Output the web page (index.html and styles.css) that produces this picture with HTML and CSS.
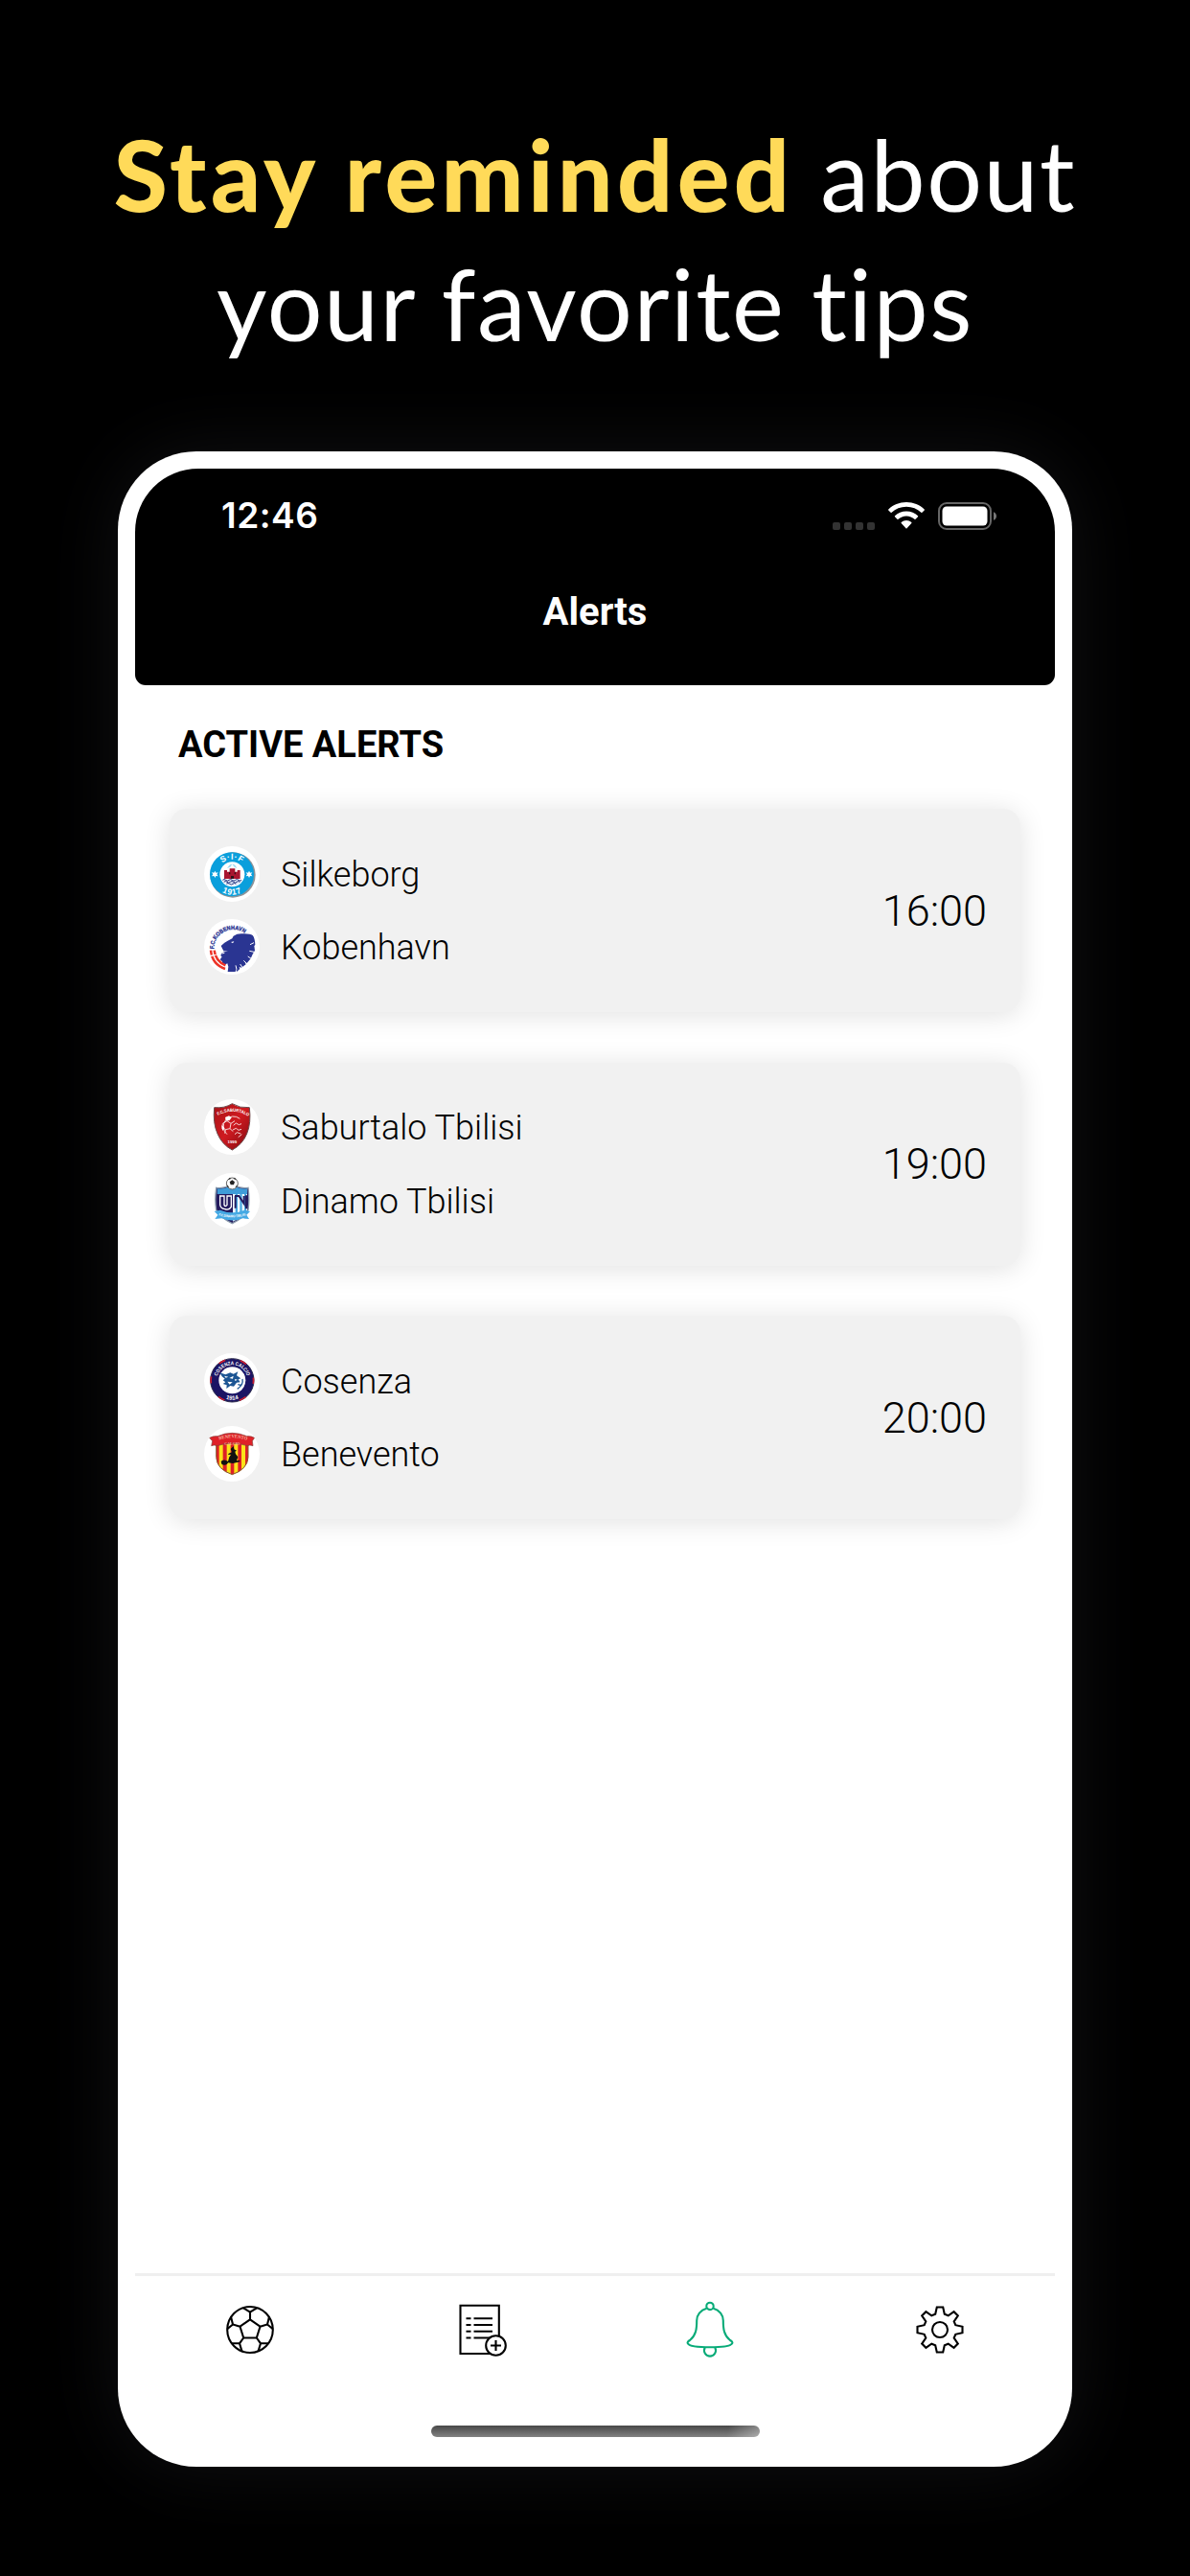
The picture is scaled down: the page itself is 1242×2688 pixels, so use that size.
FILE: index.html
```html
<!DOCTYPE html>
<html lang="en">
<head>
    <meta charset="UTF-8">
    <meta name="viewport" content="width=device-width, initial-scale=1.0">
    <title>Alerts</title>
    <link rel="stylesheet" href="styles.css">
</head>
<body>
    <h1 class="headline">
        <span class="line"><strong>Stay reminded</strong> about</span>
        <span class="line">your favorite tips</span>
    </h1>

    <div class="phone">
        <header class="top">
            <div class="status">
                <span class="clock">12:46</span>
                <div class="status-icons">
                    <div class="signal"><i></i><i></i><i></i><i></i></div>
                    <svg class="wifi" width="38" height="28" viewBox="0 0 38 28">
                        <path d="M19 0C11.700 0 5 2.800.300 7.400q-.5.500 0 1L2.600 10.700q.5.500 1 0C7.600 6.900 13 4.700 19 4.700s11.400 2.200 15.400 6q.5.500 1 0L37.700 8.400q.5-.5 0-1C33 2.800 26.300 0 19 0z"/>
                        <path d="M19 9.600c-4.700 0-8.900 1.800-12 4.700q-.5.500 0 1l2.500 2.500q.5.500 1 0c2.200-2 5.200-3.300 8.500-3.300s6.300 1.300 8.500 3.300q.5.500 1 0l2.500-2.500q.5-.5 0-1c-3.100-2.900-7.300-4.700-12-4.700z"/>
                        <path d="M19 19c-2 0-3.900.8-5.300 2q-.5.500 0 1l4.800 5.300q.5.500 1 0l4.800-5.300q.5-.5 0-1C22.900 19.800 21 19 19 19z"/>
                    </svg>
                    <svg class="battery" width="62" height="29" viewBox="0 0 62 29">
                        <rect x="1" y="1" width="54" height="27" rx="8" fill="none" stroke="#666" stroke-width="2"/>
                        <rect x="4.500" y="4.500" width="47" height="20" rx="4.500" fill="#fff"/>
                        <path d="M58 10.200c4 1.400 4 7.200 0 8.600z" fill="#777"/>
                    </svg>
                </div>
            </div>
            <h2 class="title">Alerts</h2>
        </header>

        <main class="content">
            <h3 class="section">ACTIVE ALERTS</h3>
            <div class="alerts">
                <div class="card">
                    <div class="teams">
                        <div class="team">
                            <svg class="logo" viewBox="0 0 174 174">
                                <circle cx="90" cy="90" r="71" fill="#8d9499"/>
                                <circle cx="87" cy="88" r="69" fill="#0a9fdc"/>
                                <circle cx="88" cy="88" r="39" fill="#fff"/>
                                <path d="M72 69q8-14 16-13q9-1 15 13l-8-4-7-9-6 9z" fill="#9fdcf2"/>
                                <path d="M63 75h9v5h8V70h17v10h7v-5h9v27H63z" fill="#a8152f"/>
                                <path d="M78 82h4v6h-4zM95 82h4v6h-4zM84 93h9v9h-9z" fill="#301018"/>
                                <path d="M57 105h62q-3 10-15 15H74q-12-5-17-15z" fill="#dfe9f8"/>
                                <path d="M58 106q5-5 10 0t10 0 10 0 10 0 10 0 9 0M62 112q5-5 10 0t10 0 10 0 10 0 10 0M70 118q5-5 10 0t10 0 10 0" fill="none" stroke="#25357f" stroke-width="3"/>
                                <path id="sifTop" d="M41 88a47 47 0 0 1 94 0" fill="none"/>
                                <path id="sifBottom" d="M24 88a64 64 0 0 0 128 0" fill="none"/>
                                <text class="crest" font-size="26" fill="#fff" text-anchor="middle" letter-spacing="2"><textPath href="#sifTop" startOffset="50%">S·I·F</textPath></text>
                                <text class="crest" font-size="26" fill="#fff" text-anchor="middle" letter-spacing="2"><textPath href="#sifBottom" startOffset="50%">1917</textPath></text>
                                <path id="star" d="M34 77l3 6 7-1-4 6 4 6-7-1-3 6-3-6-7 1 4-6-4-6 7 1z" fill="#fff"/>
                                <use href="#star" x="107"/>
                            </svg>
                            <span class="name">Silkeborg</span>
                        </div>
                        <div class="team">
                            <svg class="logo" viewBox="0 0 174 174">
                                <path id="fck" d="M31 94C30 63 54 33 90 33q20 0 36 11" fill="none"/>
                                <text class="crest" font-size="18" fill="#2a3592" stroke="#2a3592" stroke-width="1"><textPath href="#fck" textLength="134" lengthAdjust="spacingAndGlyphs">F.C.KOBENHAVN</textPath></text>
                                <path d="M53 84l11-10 10-6 14-7 4-8q12-8 28-7 24-1 32 5 7 8 8 30l-3 3 2 14-7 12-6 14-12 14-6-3 3 7-14 10-7-2 2 6-10 9-2-10-2 10H74l2-16-3-10-10 5-7-5 1-6-6-5 1-5 4-4-4-5q1-8 10-11l13-2-14-1z" fill="#2a3592"/>
                                <path d="M84 72l10-2-4 6z" fill="#fff"/>
                                <path d="M56 108l8-2M99 145l3 13M113 141l8 12M124 130l12 12M137 117l12 8M142 100l14 3M144 80l12-6" stroke="#fff" stroke-width="3"/>
                                <path d="M21 98q4 44 45 58M32 98q3 33 35 47" fill="none" stroke="#ed3327" stroke-width="7.500"/>
                                <path d="M14 116l24-4M30 112l-12 6" stroke="#fff" stroke-width="3"/>
                            </svg>
                            <span class="name">Kobenhavn</span>
                        </div>
                    </div>
                    <span class="time">16:00</span>
                </div>

                <div class="card">
                    <div class="teams">
                        <div class="team">
                            <svg class="logo" viewBox="0 0 174 174">
                                <defs>
                                    <linearGradient id="red" x1="0" y1="0" x2="1" y2="1">
                                        <stop offset="0" stop-color="#a81217"/>
                                        <stop offset=".5" stop-color="#cf1a20"/>
                                        <stop offset="1" stop-color="#7c0a10"/>
                                    </linearGradient>
                                </defs>
                                <path d="M88 14q24 15 54 12 6 48-8 82-14 34-46 51-32-17-46-51-15-34-10-82 32 3 56-12z" fill="url(#red)" stroke="#6b4b4d" stroke-width="3"/>
                                <path id="sabTop" d="M40 53q48-29 98 0" fill="none"/>
                                <text class="crest" font-size="14" fill="#fff"><textPath href="#sabTop" startOffset="4" textLength="100" lengthAdjust="spacingAndGlyphs">F.C.SABURTALO</textPath></text>
                                <g fill="none" stroke="#f6d6d6" stroke-width="3">
                                    <path d="M112 61A29 29 0 1 0 72 110M58 76l14-8 12 8-3 16-14 3-10-8zM84 76l12-8M81 92l10 9M67 95l-2 12M72 68l-2-12"/>
                                    <path d="M92 82l8-7 9 5 8-3M90 96l10-5 8 6 9-3M96 110l7-6 12 4M107 119l11-9"/>
                                </g>
                                <path d="M66 57l12-5 8 6-7 9-11 0zM56 81l8 9-5 9-4-8z" fill="#fff"/>
                                <text class="crest" x="88" y="138" font-size="13" fill="#fff" text-anchor="middle">1999</text>
                            </svg>
                            <span class="name">Saburtalo Tbilisi</span>
                        </div>
                        <div class="team">
                            <svg class="logo" viewBox="0 0 174 174">
                                <path d="M38 46q25 4 50-10 25 14 50 10 5 40 0 70-16 26-50 42-34-16-50-42-5-30 0-70z" fill="#241b5e" stroke="#8b9bad" stroke-width="4"/>
                                <path d="M41 49q23 2 47-10 24 12 47 10v17H41z" fill="#3f9cd8"/>
                                <path d="M90 66h45v50q-14 22-45 36z" fill="#f4fbff"/>
                                <path d="M98 66h7v80h-7zM112 66h7v70h-7zM126 66h6v55h-6z" fill="#4aa9e0"/>
                                <path d="M50 72h13v28q4 7 9 0V72h13v34q-7 12-20 7-14-2-15-14z" fill="none" stroke="#fff" stroke-width="4"/>
                                <path d="M96 72h13l16 24V72M98 72v38M132 70v42" fill="none" stroke="#241b5e" stroke-width="6"/>
                                <path d="M32 120l18-4q38 16 77 0l17 4-11 11 8 13-20-2q-33 13-66 0l-21 2 9-13z" fill="#45a9e4"/>
                                <path id="dinBottom" d="M40 131q46 16 96 0" fill="none"/>
                                <text class="crest" font-size="11" fill="#fff"><textPath href="#dinBottom" startOffset="6" textLength="86" lengthAdjust="spacingAndGlyphs">F.C.DINAMO TBILISI</textPath></text>
                                <circle cx="88" cy="33" r="18" fill="#fff" stroke="#666" stroke-width="3"/>
                                <path d="M80 28l8-6 8 6-3 9H83zM74 22l6-7 5 3zM102 22l-6-7-5 3zM73 37l6 9-7-3zM103 37l-6 9 7-3z" fill="#222"/>
                            </svg>
                            <span class="name">Dinamo Tbilisi</span>
                        </div>
                    </div>
                    <span class="time">19:00</span>
                </div>

                <div class="card">
                    <div class="teams">
                        <div class="team">
                            <svg class="logo" viewBox="0 0 174 174">
                                <circle cx="88" cy="85" r="68" fill="#1b1464" stroke="#2d2c4d" stroke-width="3"/>
                                <circle cx="88" cy="85" r="66.500" fill="none" stroke="#c91d31" stroke-width="5" stroke-dasharray="22 47.600" stroke-dashoffset="11"/>
                                <circle cx="88" cy="85" r="42" fill="#fff"/>
                                <path d="M49 61l18 6 15-6 10 4 14-7-4 12 13 9-8 3 6 9-11 1-9 12-11-2-12 9 1-11-12-4 8-5-8-6 6-5-9-7z" fill="#1c5593"/>
                                <path d="M63 71l13 3-8 3zM79 78l13-7-2 9zM73 89l16 2-9 7zM96 81l9 2-8 4z" fill="#fff"/>
                                <path d="M120 81q4 18-16 31M117 101l-11-3" fill="none" stroke="#1c5593" stroke-width="4"/>
                                <path id="cosTop" d="M40 85a48 48 0 0 1 96 0" fill="none"/>
                                <path id="cosBottom" d="M27 85a61 61 0 0 0 122 0" fill="none"/>
                                <text class="crest" font-size="16" fill="#fff"><textPath href="#cosTop" startOffset="13" textLength="124" lengthAdjust="spacingAndGlyphs">COSENZA CALCIO</textPath></text>
                                <text class="crest" font-size="18" fill="#fff" text-anchor="middle"><textPath href="#cosBottom" startOffset="50%">1914</textPath></text>
                            </svg>
                            <span class="name">Cosenza</span>
                        </div>
                        <div class="team">
                            <svg class="logo" viewBox="0 0 174 174">
                                <clipPath id="benClip"><path d="M38 44h100v54q-2 38-50 54-48-16-50-54z"/></clipPath>
                                <g clip-path="url(#benClip)">
                                    <path d="M38 40h100v114H38z" fill="#fbe219"/>
                                    <path d="M38 40h9v114h-9zM59 40h12v114H59zM83 40h11v114H83zM106 40h11v114h-11zM129 40h10v114h-10z" fill="#dd2027"/>
                                </g>
                                <path d="M38 44v54q2 38 50 54 48-16 50-54V44" fill="none" stroke="#85552b" stroke-width="3"/>
                                <path d="M17 37q10-6 25-5 46-20 92 0 15-1 24 5l-7 10 2 15q-10-4-18 0-47-16-94 0-9-4-18 0l3-15z" fill="#df2128" stroke="#82413b" stroke-width="2"/>
                                <path id="benTop" d="M40 46q48-18 98 0" fill="none"/>
                                <text class="crest serif" font-size="15" fill="#f6b7a0"><textPath href="#benTop" startOffset="8" textLength="88" lengthAdjust="spacingAndGlyphs">BENEVENTO</textPath></text>
                                <text class="crest serif" x="88" y="59" font-size="12" fill="#f6b7a0" text-anchor="middle">CALCIO</text>
                                <path d="M83 72l9-9 2 10 8 4-5 3 2 8 7 9-4 12 10-2v5l-22 5-15-2-3 4q-9 6-17 0l-2-8q8-7 16-3l6 3 4-14 6-8-10 1 2-4 10-4z" fill="#111"/>
                            </svg>
                            <span class="name">Benevento</span>
                        </div>
                    </div>
                    <span class="time">20:00</span>
                </div>
            </div>
        </main>

        <nav class="tabs">
            <a class="tab" href="#">
                <svg viewBox="-30 -30 60 60">
                    <ellipse rx="23.800" ry="24"/>
                    <path d="M0-10.700L10.500-3.300 6.800 8.500H-6.800L-10.500-3.300zM0-10.700v-7.600M0-18.300L7-22.700M0-18.300L-7-22.700M10.500-3.300L18-5.500 20-13.500M18-5.500L23.800-.8M-10.500-3.300L-18-5.500-20-13.500M-18-5.500L-23.800-.8M6.800 8.500L11 14.300 8.500 22.500M11 14.300h8.300M-6.800 8.500L-11 14.300-8.500 22.500M-11 14.300h-8.300"/>
                </svg>
            </a>
            <a class="tab" href="#">
                <svg viewBox="-30 -30 60 60">
                    <path d="M-20.500-25.300H19.800V25H-20.500z"/>
                    <path d="M-14.500-11.700h5M-6.500-11.700h19.500M-14.500-5h5M-6.500-5h19.500M-14.500 1.700h5M-6.500 1.700h19.500M-14.500 8.500h5M-6.500 8.500h19.500"/>
                    <circle cx="16.500" cy="16.500" r="10.300" fill="#fff"/>
                    <path d="M11 16.500h11M16.500 11v11"/>
                </svg>
            </a>
            <a class="tab active" href="#">
                <svg viewBox="-30 -30 60 60">
                    <circle cy="-24.600" r="3.700"/>
                    <path d="M-3.500-22.200C-10-20.500-13.800-15-13.800-9.500-13.800-1-14.500 6-21 11c-2 1.300-3 2.200-2 3.500C-21.500 17-13 18.300 0 18.300S21.500 17 23 14.500c1-1.300 0-2.200-2-3.500C14.500 6 13.800-1 13.800-9.500 13.800-15 10-20.500 3.500-22.200"/>
                    <path d="M-5.300 18.800a6 6 0 1 0 10.600 0"/>
                </svg>
            </a>
            <a class="tab" href="#">
                <svg viewBox="-30 -30 60 60">
                    <path d="M3.200-23.500L4.800-16.300 8.700-14.700 14.600-18.800 18.800-14.600 14.700-8.700 16.300-4.800 23.500-3.200V3.200L16.300 4.800 14.700 8.700 18.800 14.600 14.600 18.800 8.700 14.700 4.800 16.300 3.200 23.500H-3.200L-4.800 16.300-8.700 14.700-14.600 18.800-18.800 14.600-14.700 8.700-16.300 4.800-23.500 3.200V-3.200L-16.300-4.800-14.700-8.700-18.800-14.600-14.600-18.800-8.700-14.700-4.800-16.300-3.200-23.500z"/>
                    <circle r="8"/>
                </svg>
            </a>
        </nav>
        <div class="home-bar"></div>
    </div>
</body>
</html>
```
FILE: styles.css
```css
* {
    box-sizing: border-box;
}
body {
    margin: 0;
    padding: 114px 0 0;
    height: 2688px;
    overflow: hidden;
    background: #000;
    font-family: Roboto, sans-serif;
    color: #000;
}
.headline {
    margin: 0;
    height: 357px;
    font-family: Lato, sans-serif;
    font-size: 102px;
    font-weight: 400;
    line-height: 135px;
    letter-spacing: 1.6px;
    color: #fff;
    text-align: center;
}
.line {
    display: block;
    white-space: nowrap;
}
.headline strong {
    font-weight: 900;
    letter-spacing: 4.4px;
    color: #ffda59;
}
.phone {
    display: flex;
    flex-direction: column;
    width: 996px;
    height: 2103px;
    margin: 0 auto 0 123px;
    padding: 18px;
    background: #fff;
    border-radius: 82px;
    box-shadow: 0 0 80px rgba(170, 170, 190, 0.1);
}
.top {
    height: 226px;
    padding-top: 27px;
    background: #000;
    border-radius: 66px 66px 11px 11px;
}
.status {
    display: flex;
    justify-content: space-between;
    align-items: center;
    height: 44px;
    padding: 0 60px 0 90px;
}
.clock {
    font-family: Inter, sans-serif;
    font-size: 37px;
    font-weight: 600;
    line-height: 44px;
    letter-spacing: 0.5px;
    color: #fff;
}
.status-icons {
    display: flex;
    align-items: center;
}
.signal {
    display: flex;
    gap: 4px;
    align-self: flex-end;
    margin-right: 14px;
}
.signal i {
    width: 8px;
    height: 8px;
    border-radius: 2px;
    background: #333;
}
.wifi {
    margin-right: 14px;
    fill: #fff;
}
.title {
    margin: 55px 0 0;
    font-size: 40px;
    font-weight: 700;
    line-height: 48px;
    color: #fff;
    text-align: center;
}
.content {
    flex: 1;
    padding: 40px 36px 0;
}
.section {
    margin: 0 0 45px 9px;
    font-size: 38px;
    font-weight: 700;
    line-height: 44px;
}
.alerts {
    display: flex;
    flex-direction: column;
    gap: 52.5px;
}
.card {
    display: flex;
    justify-content: space-between;
    align-items: center;
    height: 212px;
    padding: 0 35px 0 36px;
    background: #f1f1f1;
    border-radius: 18px;
    box-shadow: 0 3px 28px rgba(0, 0, 0, 0.12);
}
.teams {
    display: flex;
    flex-direction: column;
    gap: 18.5px;
}
.team {
    display: flex;
    align-items: center;
    gap: 22px;
}
.logo {
    width: 58px;
    height: 58px;
    border-radius: 50%;
    background: #fff;
}
.crest {
    font-family: "Liberation Sans", sans-serif;
    font-weight: 700;
}
.crest.serif {
    font-family: "Liberation Serif", serif;
}
.name {
    padding-top: 2px;
    font-size: 36px;
    font-weight: 300;
    line-height: 56px;
}
.time {
    font-size: 45px;
    font-weight: 300;
}
.tabs {
    display: flex;
    height: 159px;
    padding-top: 26px;
    border-top: 3px solid #efefef;
}
.tab {
    flex: 1;
    display: flex;
    justify-content: center;
}
.tab svg {
    width: 60px;
    height: 60px;
    fill: none;
    stroke: #000;
    stroke-width: 2.1;
}
.tab.active svg {
    stroke: #08ab78;
}
.home-bar {
    width: 343px;
    height: 12px;
    margin: 0 auto 13px 309px;
    border-radius: 6px;
    background: linear-gradient(100deg, transparent 90%, rgba(255, 255, 255, 0.35)), linear-gradient(#484848, #828282);
}
```
